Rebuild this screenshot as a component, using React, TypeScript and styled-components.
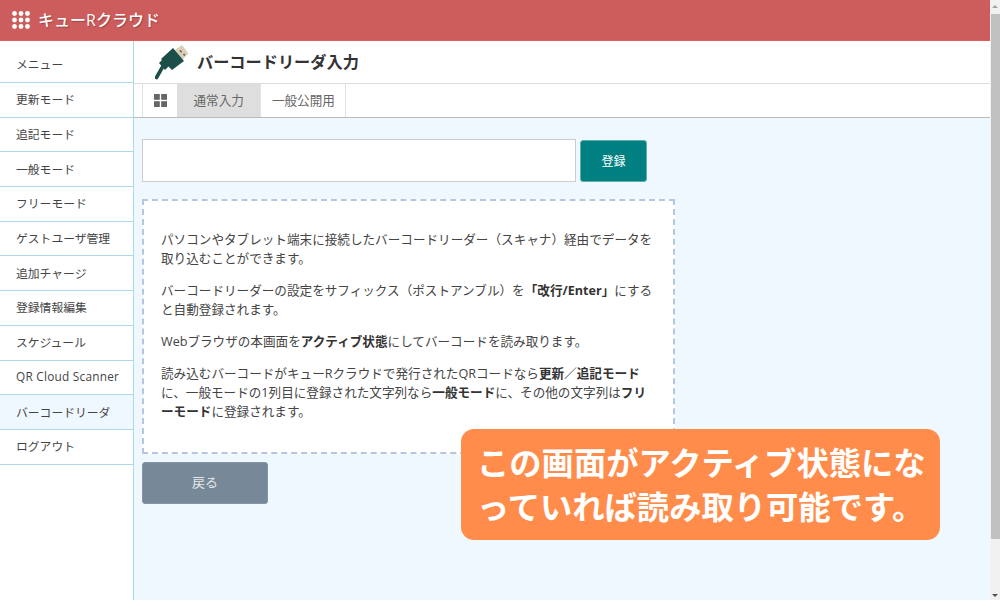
import styled, { createGlobalStyle } from "styled-components"

const MENU_ITEMS = [
  "メニュー",
  "更新モード",
  "追記モード",
  "一般モード",
  "フリーモード",
  "ゲストユーザ管理",
  "追加チャージ",
  "登録情報編集",
  "スケジュール",
  "QR Cloud Scanner",
  "バーコードリーダ",
  "ログアウト",
]

export default function App() {
  return (
    <Page>
      <GlobalStyle />
      <Content>
        <Header>
          <DotsIcon />
          <Brand>キューRクラウド</Brand>
        </Header>
        <Body>
          <Sidebar>
            {MENU_ITEMS.map((item, i) => (
              <MenuItem
                key={item}
                $first={i === 0}
                $active={item === "バーコードリーダ"}
                $latin={/^[A-Za-z ]+$/.test(item)}
              >
                {item}
              </MenuItem>
            ))}
          </Sidebar>
          <Main>
            <TitleBar>
              <UsbIcon />
              <Title>バーコードリーダ入力</Title>
            </TitleBar>
            <TabBar>
              <GridTab>
                <GridIcon />
              </GridTab>
              <Tab $active>通常入力</Tab>
              <Tab>一般公開用</Tab>
            </TabBar>
            <Panel>
              <InputRow>
                <CodeInput />
                <SubmitButton>登録</SubmitButton>
              </InputRow>
              <InfoBox>
                <p>
                  パソコンやタブレット端末に接続したバーコードリーダー（スキャナ）経由でデータを取り込むことができます。
                </p>
                <p>
                  バーコードリーダーの設定をサフィックス（ポストアンブル）を<b>「改行/Enter」</b>にすると自動登録されます。
                </p>
                <p>
                  Webブラウザの本画面を<b>アクティブ状態</b>にしてバーコードを読み取ります。
                </p>
                <p>
                  読み込むバーコードがキューRクラウドで発行されたQRコードなら<b>更新／追記モード</b>に、一般モードの1列目に登録された文字列なら<b>一般モード</b>に、その他の文字列は<b>フリーモード</b>に登録されます。
                </p>
              </InfoBox>
              <BackButton>戻る</BackButton>
            </Panel>
          </Main>
        </Body>
      </Content>
      <Scrollbar>
        <ScrollArrow $up />
        <ScrollThumb />
        <ScrollArrow />
      </Scrollbar>
      <Callout>この画面がアクティブ状態になっていれば読み取り可能です。</Callout>
    </Page>
  )
}

function DotsIcon() {
  const cells = [0, 1, 2]
  return (
    <svg width="18" height="18" viewBox="0 0 18 18" fill="#fff">
      {cells.map((y) =>
        cells.map((x) => <circle key={`${x}-${y}`} cx={2.5 + x * 6.5} cy={2.5 + y * 6.5} r="2.4" />)
      )}
    </svg>
  )
}

function UsbIcon() {
  return (
    <svg width="34" height="36" viewBox="0 0 34 36">
      <path d="M20 5 L27 0 L33.5 8.5 L27 15 Z" fill="#d9cfb4" />
      <path d="M25 5.5 l1.6 1.6 M28.5 9 l1.4 1.4" stroke="#5e5f52" strokeWidth="1.5" />
      <path d="M18 3 L29 16 L17 25 L6 14 Z" fill="#1c4f49" />
      <path d="M4 18 L8 14 L14 21 L10 25 Z" fill="#1c4f49" />
      <path d="M7.5 22 L1.5 32.5" stroke="#1c4f49" strokeWidth="3.6" strokeLinecap="round" />
    </svg>
  )
}

function GridIcon() {
  return (
    <svg width="13" height="13" viewBox="0 0 13 13" fill="#666">
      <rect x="0" y="0" width="5.8" height="5.8" />
      <rect x="7.2" y="0" width="5.8" height="5.8" />
      <rect x="0" y="7.2" width="5.8" height="5.8" />
      <rect x="7.2" y="7.2" width="5.8" height="5.8" />
    </svg>
  )
}

const FONT = `"Open Sans", "Noto Sans CJK JP", sans-serif`

const GlobalStyle = createGlobalStyle`
  html, body {
    margin: 0;
    height: 100%;
    overflow: hidden;
  }
  body {
    font-family: ${FONT};
    color: #333;
  }
`
const Page = styled.div`
  display: flex;
  position: relative;
  width: 1000px;
  height: 600px;
  overflow: hidden;
`
const Content = styled.div`
  display: flex;
  flex-direction: column;
  flex: 1;
  min-width: 0;
`
const Header = styled.header`
  display: flex;
  align-items: center;
  gap: 8px;
  height: 41px;
  box-sizing: border-box;
  padding: 0 0 1px 12px;
  border-bottom: 1px solid #e25c5c;
  background: indianred;
  flex-shrink: 0;
`
const Brand = styled.div`
  margin-top: -2px;
  color: #fff;
  font-size: 16px;
  font-weight: 500;
  text-shadow: 1px 1px 1px rgba(0, 0, 0, 0.25);
`
const Body = styled.div`
  display: flex;
  flex: 1;
  min-height: 0;
`
const Sidebar = styled.nav`
  width: 134px;
  flex-shrink: 0;
  box-sizing: border-box;
  border-right: 1px solid lightblue;
  background: #fff;
`
const MenuItem = styled.div<{ $first?: boolean; $active?: boolean; $latin?: boolean }>`
  display: flex;
  align-items: center;
  box-sizing: border-box;
  height: ${({ $first }) => ($first ? "42px" : "34.7px")};
  padding: ${({ $first }) => ($first ? "3px 0 0 16px" : "0 0 2px 16px")};
  border-bottom: 1px solid lightblue;
  background: ${({ $active }) => ($active ? "aliceblue" : "#fff")};
  font-size: 11.8px;
  letter-spacing: ${({ $latin }) => ($latin ? "0.25px" : "0")};
  color: #444;
  white-space: nowrap;
`
const Main = styled.main`
  display: flex;
  flex-direction: column;
  flex: 1;
  min-width: 0;
`
const TitleBar = styled.div`
  display: flex;
  align-items: center;
  gap: 8px;
  height: 43px;
  box-sizing: border-box;
  padding: 1px 0 0 21px;
  border-bottom: 1px solid #ddd;
  flex-shrink: 0;
`
const Title = styled.h1`
  margin: 0 0 4px;
  font-size: 16.2px;
  font-weight: bold;
  color: #333;
`
const TabBar = styled.div`
  display: flex;
  height: 34px;
  box-sizing: border-box;
  padding-left: 8px;
  border-bottom: 1px solid #bbb;
  flex-shrink: 0;
`
const GridTab = styled.div`
  display: flex;
  align-items: center;
  justify-content: center;
  width: 34px;
  border-left: 1px solid #e2e2e2;
`
const Tab = styled.div<{ $active?: boolean }>`
  display: flex;
  align-items: center;
  padding: 0 ${({ $active }) => ($active ? "16.5px" : "10.5px")} 3px;
  border-right: 1px solid #e2e2e2;
  background: ${({ $active }) => ($active ? "#dedede" : "#fff")};
  font-size: 12.6px;
  color: #666;
`
const Panel = styled.div`
  flex: 1;
  padding: 21px 8px 0;
  background: aliceblue;
`
const InputRow = styled.div`
  display: flex;
  align-items: center;
  gap: 4px;
`
const CodeInput = styled.input`
  box-sizing: border-box;
  width: 434px;
  height: 43px;
  border: 1px solid #ccc;
  background: #fff;
`
const SubmitButton = styled.button`
  width: 67px;
  height: 42px;
  border: 1px solid #5fb0ad;
  border-radius: 3px;
  background: teal;
  color: #fff;
  font-family: inherit;
  font-size: 12px;
`
const InfoBox = styled.div`
  box-sizing: border-box;
  width: 533px;
  height: 255px;
  margin-top: 17px;
  padding: 29px 16px 0 17px;
  border: 2px dashed #b4c6e0;
  background: #fff;
  font-size: 12.6px;
  line-height: 19px;
  color: #444;

  p {
    margin: 0 0 13px;
  }
  b {
    color: #333;
  }
`
const BackButton = styled.button`
  display: block;
  width: 126px;
  height: 42px;
  margin-top: 8px;
  padding-bottom: 4px;
  border: 1px solid #8496a6;
  border-radius: 3px;
  background: lightslategray;
  color: #e6e6e6;
  font-family: inherit;
  font-size: 13px;
`
const Scrollbar = styled.div`
  display: flex;
  flex-direction: column;
  justify-content: space-between;
  align-items: flex-end;
  width: 10px;
  flex-shrink: 0;
  background: #f1f1f1;
`
const ScrollThumb = styled.div`
  width: 9px;
  height: 525px;
  margin-bottom: auto;
  background: #c1c1c1;
`
const ScrollArrow = styled.div<{ $up?: boolean }>`
  margin: ${({ $up }) => ($up ? "5px 2px 6px 0" : "0 2px 3px 0")};
  border-left: 3px solid transparent;
  border-right: 3px solid transparent;
  border-top: ${({ $up }) => ($up ? "none" : "3px solid #505050")};
  border-bottom: ${({ $up }) => ($up ? "3px solid #a3a3a3" : "none")};
`
const Callout = styled.div`
  position: absolute;
  left: 461px;
  top: 429px;
  box-sizing: border-box;
  width: 479px;
  height: 111px;
  padding: 10px 8px 10px 16px;
  border-radius: 13px;
  background: #ff8c4b;
  color: #fff;
  font-family: "Noto Sans CJK JP", sans-serif;
  font-size: 32.3px;
  font-weight: bold;
  line-height: 44px;
`
